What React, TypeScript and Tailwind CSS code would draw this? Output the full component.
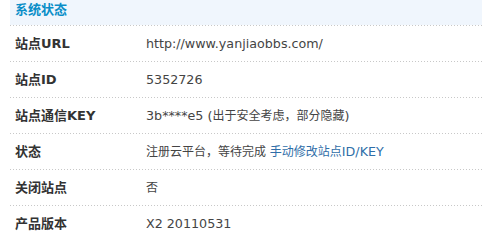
import React from "react";

const L = ({ children }: { children: React.ReactNode }) => (
  <span className="text-[12.7px]">{children}</span>
);

const rows: { label: React.ReactNode; value: React.ReactNode }[] = [
  { label: "站点URL", value: <L>http://www.yanjiaobbs.com/</L> },
  { label: "站点ID", value: <L>5352726</L> },
  {
    label: "站点通信KEY",
    value: (
      <>
        <L>3b****e5 (</L>出于安全考虑，部分隐藏<L>)</L>
      </>
    ),
  },
  {
    label: "状态",
    value: (
      <>
        注册云平台，等待完成{" "}
        <a href="#" className="text-[#2f6ea8] no-underline">
          手动修改站点<L>ID/KEY</L>
        </a>
      </>
    ),
  },
  { label: "关闭站点", value: "否" },
  { label: "产品版本", value: <L>X2 20110531</L> },
];

export default function App() {
  return (
    <div
      className="w-[482px] h-[241px] overflow-hidden bg-white text-[12px] text-[#444]"
      style={{ fontFamily: '"DejaVu Sans", "Noto Sans CJK SC", sans-serif' }}
    >
      <div className="ml-[10px]">
        <div className="h-[25px] bg-[#f0f6fd] pl-[5px] pt-[1px] font-bold text-[13px] leading-[17px] text-[#0a8ec8]">
          系统状态
        </div>
        {rows.map((r, i) => (
          <div key={i}>
            <div className="h-px bg-[linear-gradient(to_right,#c8c8c8_1px,transparent_1px)] bg-[length:3px_1px]" />
            <div className="h-[35px] flex items-center">
              <div className="w-[136px] pl-[5px] font-bold text-[13px] text-[#333]">{r.label}</div>
              <div className="whitespace-nowrap">{r.value}</div>
            </div>
          </div>
        ))}
      </div>
    </div>
  );
}
